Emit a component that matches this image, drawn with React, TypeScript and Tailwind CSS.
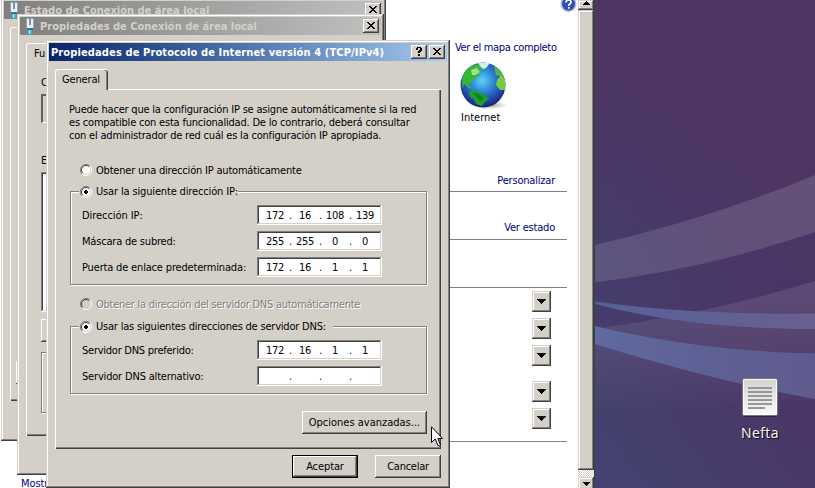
import React from "react";

const UI = "font-['DejaVu_Sans_Condensed','DejaVu_Sans',sans-serif] text-[11px] leading-[13px]";
const WINDOW =
  "bg-[#d4d0c8] shadow-[inset_-1px_-1px_0_#404040,inset_1px_1px_0_#d4d0c8,inset_-2px_-2px_0_#808080,inset_2px_2px_0_#fff]";
const RAISED =
  "bg-[#d4d0c8] shadow-[inset_-1px_-1px_0_#404040,inset_1px_1px_0_#fff,inset_-2px_-2px_0_#808080]";
const SUNKEN =
  "bg-white shadow-[inset_-1px_-1px_0_#fff,inset_1px_1px_0_#808080,inset_-2px_-2px_0_#d4d0c8,inset_2px_2px_0_#404040]";
const GROUP = "border border-[#808080] shadow-[1px_1px_0_#fff,inset_1px_1px_0_#fff]";

function CaptionButton({ kind }: { kind: "close" | "help" }) {
  return (
    <span className={`${RAISED} block h-[14px] w-4 shrink-0`}>
      <svg width="16" height="14" viewBox="0 0 16 14" shapeRendering="crispEdges">
        {kind === "close" ? (
          <path
            d="M4 3h2v1h1v1h2v-1h1v-1h2v1h-1v1h-1v1h-1v1h1v1h1v1h1v1h-2v-1h-1v-1h-2v1h-1v1h-2v-1h1v-1h1v-1h1v-1h-1v-1h-1v-1h-1z"
            fill="#000"
          />
        ) : (
          <path d="M6 2h4v1h1v3h-1v1h-1v1h-2v-2h1v-1h1v-2h-2v2h-2v-2h1zM7 9h2v2h-2z" fill="#000" />
        )}
      </svg>
    </span>
  );
}

function NetIcon() {
  return (
    <svg width="10" height="16" viewBox="0 0 10 16" className="shrink-0">
      <rect x="1" y="0" width="8" height="11" rx="1.5" fill="#8fa2bc" />
      <rect x="2" y="1" width="6" height="9" fill="#eef4fb" />
      <rect x="4" y="1" width="2" height="6" fill="#7c90ac" />
      <path d="M1.5 10h7l-1 2h-5z" fill="#4f6580" />
      <rect x="3" y="12" width="4" height="4" fill="#24bfd8" />
      <rect x="4" y="12" width="1" height="4" fill="#baf4fa" />
    </svg>
  );
}

function Radio({ checked, disabled }: { checked?: boolean; disabled?: boolean }) {
  return (
    <svg width="12" height="12" viewBox="0 0 12 12" className="shrink-0">
      <circle cx="6" cy="6" r="5" fill={disabled ? "#d4d0c8" : "#fff"} />
      <path d="M2 10A5.5 5.5 0 0 1 10 2" fill="none" stroke="#808080" />
      <path d="M2.8 9.2A4.5 4.5 0 0 1 9.2 2.8" fill="none" stroke="#404040" />
      <path d="M2 10A5.5 5.5 0 0 0 10 2" fill="none" stroke="#fff" />
      <path d="M2.8 9.2A4.5 4.5 0 0 0 9.2 2.8" fill="none" stroke="#d4d0c8" />
      {checked && <path d="M5 4h2v1h1v2h-1v1h-2v-1h-1v-2h1z" fill="#000" shapeRendering="crispEdges" />}
    </svg>
  );
}

function AddressRow({ label, octets, track }: { label: string; octets: string[]; track: string }) {
  return (
    <div className="flex h-5 items-center">
      <span className={`w-[175px] whitespace-nowrap ${track}`}>{label}</span>
      <div className={`${SUNKEN} flex h-5 w-[125px] items-center pl-2`}>
        {octets.map((octet, i) => (
          <React.Fragment key={i}>
            <span className="w-5 text-center tracking-[-0.3px]">{octet}</span>
            {i < 3 && <span className="w-[10px] pl-px text-center">.</span>}
          </React.Fragment>
        ))}
      </div>
    </div>
  );
}

function DropButton({ className = "" }: { className?: string }) {
  return (
    <span className={`${WINDOW} flex h-[21px] w-[19px] items-center justify-center ${className}`}>
      <svg width="9" height="5" viewBox="0 0 9 5" shapeRendering="crispEdges">
        <path d="M0 0h9v1h-1v1h-1v1h-1v1h-1v1h-1v-1h-1v-1h-1v-1h-1v-1h-1z" />
      </svg>
    </span>
  );
}

function Wallpaper() {
  return (
    <svg className="absolute left-[595px] top-0" width="220" height="488" viewBox="595 0 220 488">
      <defs>
        <linearGradient id="base" gradientUnits="userSpaceOnUse" x1="595" y1="440" x2="780" y2="300">
          <stop offset="0" stopColor="#434270" />
          <stop offset="0.5" stopColor="#483a69" />
          <stop offset="1" stopColor="#4c3465" />
        </linearGradient>
        <linearGradient id="upper" gradientUnits="userSpaceOnUse" x1="595" y1="260" x2="690" y2="130">
          <stop offset="0" stopColor="#433f6e" />
          <stop offset="0.5" stopColor="#493868" />
          <stop offset="1" stopColor="#4d3664" />
        </linearGradient>
        <linearGradient id="blend" x1="0" y1="0" x2="0" y2="1">
          <stop offset="0" stopColor="#fff" />
          <stop offset="0.4" stopColor="#fff" />
          <stop offset="0.7" stopColor="#000" />
        </linearGradient>
        <mask id="fade">
          <rect x="595" y="0" width="220" height="488" fill="url(#blend)" />
        </mask>
        <linearGradient id="haze" x1="0" y1="0" x2="0" y2="1">
          <stop offset="0" stopColor="#fff" stopOpacity="0.11" />
          <stop offset="0.35" stopColor="#fff" stopOpacity="0.08" />
          <stop offset="1" stopColor="#fff" stopOpacity="0" />
        </linearGradient>
        <linearGradient id="ribbon" x1="0" y1="0" x2="1" y2="0">
          <stop offset="0" stopColor="#5f6a9e" />
          <stop offset="0.6" stopColor="#5e5f93" />
          <stop offset="1" stopColor="#605b8e" />
        </linearGradient>
        <linearGradient id="thin" x1="0" y1="0" x2="1" y2="0">
          <stop offset="0" stopColor="#556199" />
          <stop offset="1" stopColor="#68608f" />
        </linearGradient>
      </defs>
      <rect x="595" y="0" width="220" height="488" fill="url(#base)" />
      <rect x="595" y="0" width="220" height="488" fill="url(#upper)" mask="url(#fade)" />
      <path d="M595 245Q712 218 815 175V232Q710 268 595 282.500Z" fill="#fff" fillOpacity="0.13" />
      <path d="M595 329Q710 313 815 281V400L595 415Z" fill="url(#haze)" />
      <path d="M595 301.500Q690 315 815 313.500V329Q690 329 595 304Z" fill="url(#thin)" />
      <path d="M595 326Q698 351 815 353.500V399Q710 380 595 344Z" fill="url(#ribbon)" />
    </svg>
  );
}

function Globe() {
  return (
    <svg width="50" height="48" viewBox="0 0 50 48">
      <defs>
        <radialGradient id="sea" cx="0.48" cy="0.4" r="0.6">
          <stop offset="0" stopColor="#62d3f2" />
          <stop offset="0.35" stopColor="#3296dc" />
          <stop offset="0.75" stopColor="#2448b0" />
          <stop offset="1" stopColor="#17246f" />
        </radialGradient>
        <radialGradient id="floor">
          <stop offset="0" stopColor="#555" stopOpacity="0.7" />
          <stop offset="1" stopColor="#999" stopOpacity="0" />
        </radialGradient>
        <clipPath id="disc">
          <circle cx="23" cy="23" r="22.500" />
        </clipPath>
      </defs>
      <ellipse cx="29" cy="43" rx="19" ry="4.500" fill="url(#floor)" />
      <circle cx="23" cy="23" r="22.500" fill="url(#sea)" />
      <g clipPath="url(#disc)">
        <path d="M2 20Q2 10 8 6Q14 1 20 3L22 7L18 10L20 13L14 17L11 21L8 22L12 27L9 26L4 22L2 27Z" fill="#35b832" />
        <path d="M11 8L17 6L20 10L16 13L12 13Z" fill="#a3df8b" />
        <path d="M18 1L30 1L26 6L23 7L20 4Z" fill="#d6efe5" />
        <path d="M34 4L39 7L44 14L45 21L40 14L36 13L35 9Z" fill="#50ba46" />
        <path d="M37 18L41 13L45 18V28L40 28L36 23Z" fill="#75cb42" />
        <path d="M9 30L13 28L18 30L23 32L29 37L25 40L22 44L16 42L14 37L10 35Z" fill="#20a02a" />
        <path d="M13 31L19 32L24 36L21 39L17 36Z" fill="#0f8219" />
      </g>
    </svg>
  );
}

function Explorer() {
  return (
    <div className="absolute left-0 top-0 flex h-[488px] w-[595px] overflow-hidden bg-white">
      <div className="flex w-[450px] flex-col pl-[21px] pt-[477px]">
        <span className="tracking-[-0.1px] text-[#000080]">Mostr</span>
      </div>
      <div className="flex w-[117px] flex-col text-[#000080]">
        <span className="mt-[41px] whitespace-nowrap pl-[5px] tracking-[-0.35px]">Ver el mapa completo</span>
        <div className="mt-2 h-12 pl-[10px]">
          <Globe />
        </div>
        <span className="mt-px pl-[11px] text-black">Internet</span>
        <span className="mt-[50px] pr-3 text-right tracking-[-0.2px]">Personalizar</span>
        <hr className="mt-[4px] border-[#808080]" />
        <span className="mt-[29px] pr-3 text-right tracking-[-0.2px]">Ver estado</span>
        <hr className="mt-[5px] border-[#808080]" />
        <hr className="mt-[47px] border-[#808080]" />
        <div className="flex flex-col items-end pr-4 pt-[3px]">
          <DropButton className="mb-1.5" />
          <DropButton className="mb-1.5" />
          <DropButton className="mb-[15px]" />
          <DropButton className="mb-1.5" />
          <DropButton />
        </div>
        <hr className="mt-3 border-[#808080]" />
      </div>
      <div className="flex w-[11px] justify-end">
        <svg className="mr-px shrink-0" width="17" height="14" viewBox="0 0 17 14">
          <circle cx="8.500" cy="4" r="8" fill="#b4bbc9" />
          <circle cx="8.500" cy="4" r="6.500" fill="#2450b8" />
          <path d="M6 2.500Q6 0 8.500 0T11 2.300Q11 3.500 8.800 4.800V6" fill="none" stroke="#fff" strokeWidth="1.700" />
          <rect x="7.900" y="7" width="1.800" height="1.800" fill="#fff" />
        </svg>
      </div>
      <div className="flex w-[17px] flex-col border-r border-[#404040] bg-[#d4d0c8]">
        <div className={`${WINDOW} flex h-[10px] shrink-0 justify-center pt-px`}>
          <svg width="7" height="4" viewBox="0 0 7 4" shapeRendering="crispEdges">
            <path d="M3 0h1v1h1v1h1v1h1v1h-7v-1h1v-1h1v-1h1z" />
          </svg>
        </div>
        <div className={`${WINDOW} h-[460px] shrink-0`} />
        <div className="h-[7px] shrink-0 bg-[repeating-conic-gradient(#d4d0c8_0_25%,#fff_0_50%)] bg-[length:2px_2px]" />
        <div className={`${WINDOW} flex h-[17px] shrink-0 justify-center pt-[5px]`}>
          <svg width="7" height="4" viewBox="0 0 7 4" shapeRendering="crispEdges">
            <path d="M0 0h7v1h-1v1h-1v1h-1v1h-1v-1h-1v-1h-1v-1h-1z" />
          </svg>
        </div>
      </div>
    </div>
  );
}

function StatusWindow() {
  return (
    <div className={`${WINDOW} absolute left-px top-[-2px] h-[443px] w-[385px] p-[3px]`}>
      <div className="flex h-[18px] items-center bg-linear-to-r from-[#808080] to-[#c0c0c0] pl-[5px] pr-[2px] font-bold text-[#d4d0c8]">
        <NetIcon />
        <span className="ml-[5px] flex-1 whitespace-nowrap">Estado de Conexión de área local</span>
        <CaptionButton kind="close" />
      </div>
      <div className="ml-1.5 mt-2 flex h-[374px] w-[365px] items-end rounded-tl-[3px] border-l border-t border-white pb-[17px] pl-[5px] shadow-[inset_0_-1px_0_#404040,inset_0_-2px_0_#808080]">
        <div className={`${RAISED} h-[23px] w-16`} />
      </div>
    </div>
  );
}

function PropertiesWindow() {
  return (
    <div className={`${WINDOW} absolute left-[17px] top-[14px] h-[461px] w-[367px] p-[3px]`}>
      <div className="flex h-[18px] items-center bg-linear-to-r from-[#808080] to-[#c0c0c0] pl-[5px] pr-[2px] font-bold text-[#d4d0c8]">
        <NetIcon />
        <span className="ml-[5px] flex-1 whitespace-nowrap">Propiedades de Conexión de área local</span>
        <CaptionButton kind="close" />
      </div>
      <div className="ml-1.5 mt-2 flex h-[393px] w-[345px] flex-col rounded-tl-[3px] border-l border-t border-white pl-[14px] shadow-[inset_0_-1px_0_#404040,inset_0_-2px_0_#808080]">
        <span className="-ml-[7px] mt-[3px]">Fu</span>
        <span className="mt-[16px] w-[6px] overflow-hidden">C</span>
        <div className="mt-[5px] h-[29px] w-80 border-b border-l-2 border-t-2 border-b-white border-l-[#606060] border-t-[#606060]" />
        <span className="mt-[31px] w-[6px] overflow-hidden">E</span>
        <div className={`${SUNKEN} mt-[5px] h-[140px] w-80 shrink-0`} />
        <div className={`${RAISED} mt-[7px] h-[23px] w-24 shrink-0`} />
        <div className={`${GROUP} mt-[10px] h-[61px] w-80 shrink-0`} />
      </div>
    </div>
  );
}

function TcpIpDialog() {
  return (
    <div className={`${WINDOW} absolute left-[46px] top-10 h-[448px] w-[404px] p-[3px]`}>
      <div className="flex h-[18px] items-center bg-linear-to-r from-[#0a246a] to-[#a6caf0] pl-[2px] pr-[2px] font-bold text-white">
        <span className="flex-1 whitespace-nowrap tracking-[0.12px]">
          Propiedades de Protocolo de Internet versión 4 (TCP/IPv4)
        </span>
        <CaptionButton kind="help" />
        <span className="w-[2px]" />
        <CaptionButton kind="close" />
      </div>
      <div className="ml-1.5 mt-2 flex h-[21px] w-[53px] rounded-t-[3px] border-l border-t border-white bg-[#d4d0c8] pl-1.5 pt-[3px] shadow-[inset_-1px_0_0_#404040,inset_-2px_0_0_#808080]">
        <span className="tracking-[-0.15px]">General</span>
      </div>
      <div className="-mt-px ml-1.5 flex h-[360px] w-[386px] flex-col border-l border-white pl-[14px] shadow-[inset_-1px_-1px_0_#404040,inset_-2px_-2px_0_#808080]">
        <div className="-ml-[14px] flex">
          <span className="h-px w-[52px]" />
          <span className="h-px flex-1 bg-white" />
        </div>
        <p className="-ml-px mt-[13px] whitespace-nowrap tracking-[-0.2px]">
          Puede hacer que la configuración IP se asigne automáticamente si la red
          <br />
          es compatible con esta funcionalidad. De lo contrario, deberá consultar
          <br />
          con el administrador de red cuál es la configuración IP apropiada.
        </p>
        <div className="mt-[22px] flex h-3 items-center pl-[10px]">
          <Radio />
          <span className="ml-1 tracking-[-0.2px]">Obtener una dirección IP automáticamente</span>
        </div>
        <div className={`${GROUP} mt-[15px] flex h-[94px] w-[357px] shrink-0 flex-col pl-[11px]`}>
          <div className="-ml-[3px] -mt-[7px] flex h-[13px] w-[159px] items-center bg-[#d4d0c8] pl-[1px]">
            <Radio checked />
            <span className="ml-1 whitespace-nowrap tracking-[-0.15px]">Usar la siguiente dirección IP:</span>
          </div>
          <div className="mt-[7px] flex flex-col gap-1.5">
            <AddressRow label="Dirección IP:" octets={["172", "16", "108", "139"]} track="tracking-[-0.07px]" />
            <AddressRow label="Máscara de subred:" octets={["255", "255", "0", "0"]} track="tracking-[-0.2px]" />
            <AddressRow label="Puerta de enlace predeterminada:" octets={["172", "16", "1", "1"]} track="tracking-[-0.17px]" />
          </div>
        </div>
        <div className="mt-[13px] flex h-3 items-center pl-[10px] text-[#808080] [text-shadow:1px_1px_0_#fff]">
          <Radio disabled />
          <span className="ml-1 whitespace-nowrap tracking-[-0.26px]">Obtener la dirección del servidor DNS automáticamente</span>
        </div>
        <div className={`${GROUP} mt-[16px] flex h-[68px] w-[357px] shrink-0 flex-col pl-[11px]`}>
          <div className="-ml-[3px] -mt-[7px] flex h-[13px] w-[254px] items-center bg-[#d4d0c8] pl-[1px]">
            <Radio checked />
            <span className="ml-1 whitespace-nowrap tracking-[-0.2px]">Usar las siguientes direcciones de servidor DNS:</span>
          </div>
          <div className="mt-[7px] flex flex-col gap-1.5">
            <AddressRow label="Servidor DNS preferido:" octets={["172", "16", "1", "1"]} track="tracking-[-0.25px]" />
            <AddressRow label="Servidor DNS alternativo:" octets={["", "", "", ""]} track="tracking-[-0.18px]" />
          </div>
        </div>
        <button className={`${RAISED} ml-[232px] mt-[17px] h-[23px] w-[125px] shrink-0 whitespace-nowrap`}>
          Opciones avanzadas...
        </button>
      </div>
      <div className="mt-[6px] flex justify-end gap-[17px] pr-1.5">
        <button className="h-[23px] w-[66px] border border-black bg-[#d4d0c8] tracking-[-0.1px] shadow-[inset_-1px_-1px_0_#404040,inset_1px_1px_0_#fff,inset_-2px_-2px_0_#808080]">
          Aceptar
        </button>
        <button className={`${RAISED} h-[23px] w-[66px] tracking-[-0.25px]`}>Cancelar</button>
      </div>
    </div>
  );
}

function DesktopFile() {
  return (
    <div className="absolute left-[730px] top-[378px] flex w-[60px] flex-col items-center">
      <svg width="38" height="40" viewBox="0 0 38 40">
        <defs>
          <linearGradient id="paper" x1="0" y1="0" x2="0" y2="1">
            <stop offset="0" stopColor="#d2d2d2" />
            <stop offset="1" stopColor="#fafafa" />
          </linearGradient>
        </defs>
        <rect x="1.500" y="2" width="35" height="37" rx="2" fill="#000" fillOpacity="0.35" />
        <rect x="1.500" y="0.500" width="35" height="37" rx="1.500" fill="url(#paper)" stroke="#777" />
        <rect x="2.500" y="1.500" width="33" height="35" rx="1" fill="none" stroke="#fff" strokeOpacity="0.8" />
        <path d="M7 10h24M7 14h24M7 18h24M7 22h24M7 26h24M7 30h17" stroke="#979797" strokeWidth="2" />
      </svg>
      <span className="mt-[5px] font-['Open_Sans','Noto_Sans',sans-serif] text-[14px] leading-5 tracking-[0.4px] text-white [text-shadow:1px_1px_1px_#000]">
        Nefta
      </span>
    </div>
  );
}

function Cursor() {
  return (
    <svg className="absolute left-[431px] top-[426px]" width="12" height="21" viewBox="0 0 12 21">
      <path d="M0.500 0.800V16.500L4.200 13L7 19.500Q8.500 20.500 9.500 19L6.800 12.500H11.500Z" fill="#fff" stroke="#000" />
    </svg>
  );
}

export default function App() {
  return (
    <div className={`${UI} relative h-[488px] w-[815px] overflow-hidden bg-[#493868] text-black`}>
      <Wallpaper />
      <Explorer />
      <StatusWindow />
      <PropertiesWindow />
      <TcpIpDialog />
      <DesktopFile />
      <Cursor />
    </div>
  );
}
